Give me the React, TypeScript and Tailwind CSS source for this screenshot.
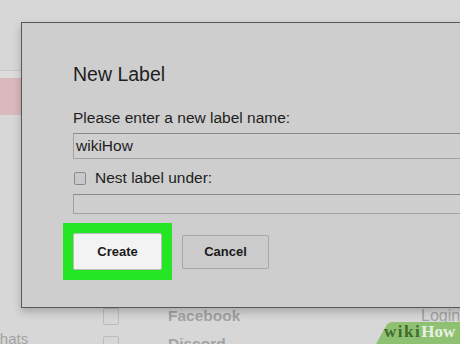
import React from 'react';

const sans = { fontFamily: '"Liberation Sans", Arial, sans-serif' };

function BackgroundRow({ left, name, right }: { left: string; name: string; right: string }) {
  return (
    <div className="flex items-center h-[28px] text-[#a3a3a3]">
      <div className="self-start pt-[1px] w-[103px] shrink-0 overflow-hidden">
        <span className="block -ml-[11px] text-[15px] leading-none">{left}</span>
      </div>
      <div className="w-[16px] h-[17px] shrink-0 border border-[#bcbcbc] rounded-[2px] bg-[#d6d6d6]" />
      <span className="ml-[49px] w-[253px] shrink-0 text-[15.5px] font-bold leading-none">{name}</span>
      <span className="text-[16px] leading-none">{right}</span>
    </div>
  );
}

function WikiHowMark() {
  return (
    <div className="absolute right-0 bottom-0 w-[84px] h-[22px]">
      <svg width="84" height="22" viewBox="0 0 84 22" className="absolute inset-0">
        <path d="M10 4 Q12 0 17 0 L84 0 L84 22 L0 22 Z" fill="#8fc173" />
      </svg>
      <div
        className="relative flex items-end h-full pl-[8px] pb-[4px] text-[17px] font-bold leading-none"
        style={{ fontFamily: '"Liberation Serif", "Times New Roman", serif' }}
      >
        <span className="text-[#3f6b2c] tracking-[1.5px]">wiki</span>
        <span className="text-[#f2f7ee] opacity-90">How</span>
      </div>
    </div>
  );
}

export default function App() {
  return (
    <div className="relative w-[460px] h-[344px] overflow-hidden bg-[#d7d7d7]" style={sans}>
      {/* page behind the dialog */}
      <div className="flex flex-col h-full">
        <div className="h-[70px] shrink-0" />
        <div className="h-[8px] w-[21px] shrink-0 border-t border-[#c8c8c8] bg-[#dcdcdc]" />
        <div className="h-[37px] w-[21px] shrink-0 bg-[#d9b9bd]" />
        <div className="flex-1" />
        <div className="shrink-0 mb-[-14px]">
          <BackgroundRow left="" name="Facebook" right="Login" />
          <BackgroundRow left="Chats" name="Discord" right="" />
        </div>
      </div>

      {/* dialog */}
      <div className="absolute left-[21px] top-[22px] w-[470px] h-[286px] border border-[#585858] bg-[#cecece] shadow-[0_4px_8px_rgba(0,0,0,0.22)] text-[#1e1e1e]">
        <div className="flex flex-col pl-[51px]">
          <h2 className="mt-[40px] h-[22px] text-[19.5px] leading-[22px] font-normal">New Label</h2>
          <p className="mt-[24px] h-[18px] text-[15.5px] leading-[18px]">Please enter a new label name:</p>
          <div className="mt-[6px] h-[26px] w-[420px] border border-[#a2a2a2] border-t-[#8a8a8a] bg-[#cfcfcf] flex items-center pl-[2px] text-[15.5px] leading-[18px]">
            wikiHow
          </div>
          <label className="mt-[10px] h-[18px] flex items-center text-[15.5px] leading-[18px]">
            <span className="ml-[1px] w-[12px] h-[13px] rounded-[2px] border border-[#8a8a8a] bg-[#c9c9c9]" />
            <span className="ml-[9px]">Nest label under:</span>
          </label>
          <div className="mt-[7px] h-[20px] w-[420px] border border-[#a2a2a2] border-t-[#8a8a8a] bg-[#cfcfcf]" />
          <div className="mt-[19px] flex items-start">
            <div className="p-[10px] -m-[10px] bg-[#25e625]">
              <button className="block w-[89px] h-[37px] rounded-[2px] border border-[#bdbdbd] bg-[#f3f3f3] text-[13px] font-bold text-[#1a1a1a]">
                Create
              </button>
            </div>
            <button className="ml-[20px] mt-[2px] w-[87px] h-[34px] rounded-[2px] border border-[#a9a9a9] bg-[#cbcbcb] text-[13px] font-bold text-[#1a1a1a]">
              Cancel
            </button>
          </div>
        </div>
      </div>

      <WikiHowMark />
    </div>
  );
}
